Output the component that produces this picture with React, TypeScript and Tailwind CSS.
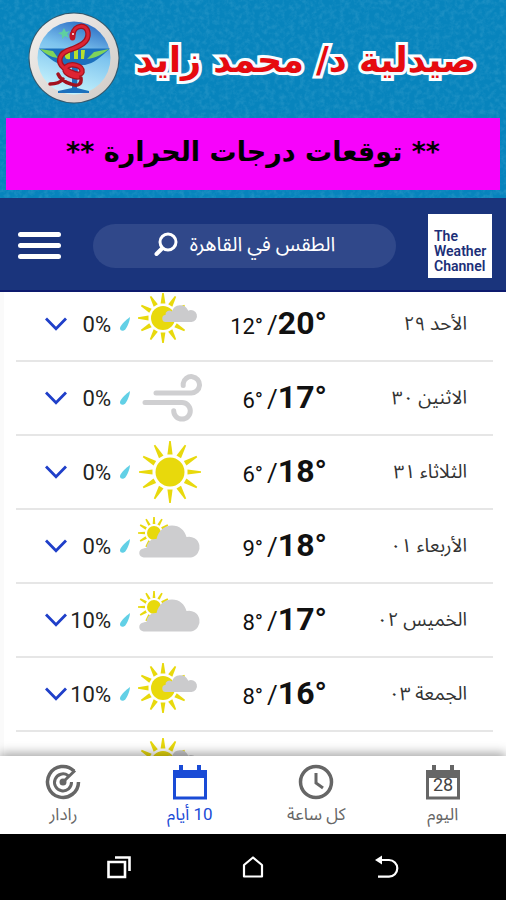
import type { ReactNode } from "react";

type Condition = "partly" | "wind" | "sunny" | "cloudy";

const forecast: {
  day: string;
  high: number;
  low: number;
  rain: number;
  condition: Condition;
}[] = [
  { day: "الأحد ٢٩", high: 20, low: 12, rain: 0, condition: "partly" },
  { day: "الاثنين ٣٠", high: 17, low: 6, rain: 0, condition: "wind" },
  { day: "الثلاثاء ٣١", high: 18, low: 6, rain: 0, condition: "sunny" },
  { day: "الأربعاء ٠١", high: 18, low: 9, rain: 0, condition: "cloudy" },
  { day: "الخميس ٠٢", high: 17, low: 8, rain: 10, condition: "cloudy" },
  { day: "الجمعة ٠٣", high: 16, low: 8, rain: 10, condition: "partly" },
];

function Sun({
  cx,
  cy,
  r,
  inner,
  outer,
  base,
}: {
  cx: number;
  cy: number;
  r: number;
  inner: number;
  outer: number;
  base: number;
}) {
  const angles = [0, 30, 60, 90, 120, 150, 180, 210, 240, 270, 300, 330];
  return (
    <g fill="#e8d90c">
      <circle cx={cx} cy={cy} r={r} />
      {angles.map((a) => (
        <path
          key={a}
          transform={`rotate(${a} ${cx} ${cy})`}
          d={`M${cx - base} ${cy - inner}L${cx - 0.8} ${cy - outer}h1.600L${cx + base} ${cy - inner}Z`}
        />
      ))}
    </g>
  );
}

function WeatherIcon({ condition }: { condition: Condition }) {
  return (
    <svg viewBox="0 0 64 64" className="w-16 h-16 shrink-0" aria-hidden="true">
      {condition === "sunny" && (
        <Sun cx={32} cy={32} r={14.5} inner={17.5} outer={31} base={2.6} />
      )}
      {condition === "partly" && (
        <>
          <Sun cx={25} cy={26} r={12} inner={14.5} outer={25} base={2.4} />
          <path
            d="M28 30a3.500 3.500 0 0 1-.5-7 4 4 0 0 1 6.500-3.500 8.500 8.500 0 0 1 16.200-.8A6 6 0 1 1 53.500 30Z"
            fill="#cbcbcd"
          />
        </>
      )}
      {condition === "cloudy" && (
        <>
          <Sun cx={16} cy={19} r={7} inner={9} outer={16} base={1.3} />
          <path
            d="M6 43.500a4.500 4.500 0 0 1-.5-9C6.500 34 7.500 34 8.500 34 9 28 13 24.500 18.500 25 20.500 17 26 11.500 34 11.500c7.500 0 12.500 4.500 14.500 11.500A10.500 10.500 0 1 1 53 43.500Z"
            fill="#cdcdcf"
          />
        </>
      )}
      {condition === "wind" && (
        <g fill="none" stroke="#cfcfd1" strokeWidth="5" strokeLinecap="round">
          <path d="M18 27H53a8.200 8.200 0 1 0-7.800-9.500v2" />
          <path d="M7 36.500H44a8.300 8.300 0 1 1-8.300 8.300" />
        </g>
      )}
    </svg>
  );
}

function Row({ item }: { item: (typeof forecast)[number] }) {
  return (
    <li className="flex h-[74px] items-center border-b-2 border-[#e6e6e6] pe-[29px] ps-[26px]">
      <span className="w-[140px] whitespace-nowrap text-[19px] text-[#333]">
        {item.day}
      </span>
      <span dir="ltr" className="flex items-baseline whitespace-nowrap text-[#111]">
        <span className="text-[22px]">{item.low}°</span>
        <span className="ms-1 text-[26px]">/</span>
        <span className="text-[32px] font-bold leading-10">{item.high}°</span>
      </span>
      <span className="flex flex-1 justify-end">
        <WeatherIcon condition={item.condition} />
      </span>
      <svg viewBox="0 0 10 14" className="h-[14px] w-[10px] shrink-0 ms-2 me-[9px]" aria-hidden="true">
        <path d="M10 0C9.800 4 7.500 9.500 5.500 12.200 3.500 14.600-.2 14 0 11 .4 8 6 3 10 0Z" fill="#62d0e6" />
      </svg>
      <span dir="ltr" className="w-11 whitespace-nowrap text-right text-[22px] text-[#222]">
        {item.rain}%
      </span>
      <button type="button" aria-label={`تفاصيل ${item.day}`} className="w-[22px] shrink-0">
        <svg viewBox="0 0 22 14" className="h-[14px] w-[22px]" fill="none" stroke="#1f3fc9" strokeWidth="2.800">
          <path d="M1 1.500 11 11.800 21 1.500" />
        </svg>
      </button>
    </li>
  );
}

function PharmacyLogo() {
  return (
    <svg viewBox="0 0 92 92" className="h-[92px] w-[92px] shrink-0" aria-hidden="true">
      <defs>
        <linearGradient id="disc" x1="0.700" y1="0" x2="0.400" y2="1">
          <stop offset="0" stopColor="#2a6cc4" />
          <stop offset="0.400" stopColor="#7cc3ee" />
          <stop offset="1" stopColor="#c9f5fd" />
        </linearGradient>
        <linearGradient id="rim" x1="0" y1="0" x2="1" y2="1">
          <stop offset="0" stopColor="#f4f1ee" />
          <stop offset="1" stopColor="#cfcac6" />
        </linearGradient>
      </defs>
      <circle cx="46" cy="46" r="45.500" fill="#35586c" />
      <circle cx="46" cy="46" r="44.500" fill="url(#rim)" />
      <circle cx="46" cy="46" r="36.500" fill="url(#disc)" />
      <path d="M11 36.500H82C72 46 66 51 57 53H50L49 76 61 79V81H30V79L44 76V53H35C26 51 20 45 11 36.500Z" fill="#1c70bd" />
      <path d="M12 37 25 39 30 46C22 45 18 42 12 37ZM81 37 66 40 59 47C68 46 75 42 81 37Z" fill="#7fd35a" />
      <path d="M37 38h5v9q-4 1-5-2ZM46 38h4v9h-4ZM53 38h4l-1 9h-3Z" fill="#b6e02e" />
      <path d="m36 16 2 4 4-1-3 3 2 4-4-2-3 3v-4l-4-2 4-1Z" fill="#5fd0a0" />
      <g fill="none" strokeLinecap="round" strokeLinejoin="round">
        <g stroke="#a3121f">
          <path d="M45 22C46 13 59 11 60 21 61 30 52 34 44 37 30 41 29 50 36 56 43 61 52 65 54 60 55 53 43 51 38 55 34 60 42 64 50 65" strokeWidth="5.500" />
          <path d="M53 66C54 72 50 75 43 72 36 70 32 67 30 62M35 67C32 71 28 72 22 72" strokeWidth="3.500" />
        </g>
        <path d="M45 22C46 13 59 11 60 21 61 30 52 34 44 37 30 41 29 50 36 56 43 61 52 65 54 60 55 53 43 51 38 55 34 60 42 64 50 65" stroke="#dd2433" strokeWidth="3" />
      </g>
      <ellipse cx="44.500" cy="24" rx="3" ry="4.500" fill="#c21626" />
      <circle cx="45" cy="22" r="1" fill="#fff" />
    </svg>
  );
}

function Banner() {
  return (
    <section className="relative bg-[#0784bd] px-[6px] pb-2 pt-3">
      <svg className="absolute inset-0 h-full w-full opacity-10" aria-hidden="true">
        <filter id="paper">
          <feTurbulence type="fractalNoise" baseFrequency="0.200" numOctaves="4" seed="4" />
          <feColorMatrix values="0 0 0 0 0.600 0 0 0 0 0.850 0 0 0 0 0.950 2.500 0 0 0 -1" />
        </filter>
        <rect width="100%" height="100%" filter="url(#paper)" />
      </svg>
      <div className="relative flex h-[92px] items-center ps-6 pe-[22px]">
        <h1 className="flex-1 whitespace-nowrap pt-1 font-['DejaVu_Sans',sans-serif] text-[35px] font-bold leading-[60px] text-[#e60a0f] [-webkit-text-stroke:6px_#fff] [paint-order:stroke_fill] [text-shadow:0_0_4px_#d8f4ff]">
          صيدلية د/ محمد زايد
        </h1>
        <PharmacyLogo />
      </div>
      <h2 className="relative mt-[14px] flex h-[72px] items-center justify-center whitespace-nowrap bg-[#f703fb] pb-1 font-['DejaVu_Sans',sans-serif] text-[27px] font-bold text-black">
        ** توقعات درجات الحرارة **
      </h2>
    </section>
  );
}

function Header() {
  return (
    <header className="flex h-[94px] shrink-0 items-center border-b-2 border-[#0d1a6e] bg-[#1a347c] pe-[18px] ps-[14px] pt-[3px]">
      <a
        href="#home"
        dir="ltr"
        className="flex h-16 w-16 items-end bg-white pb-1 pl-[6px] text-[14px] font-semibold leading-[15px] text-[#1c2f78]"
      >
        <span>
          The
          <br />
          Weather
          <br />
          Channel
        </span>
      </a>
      <button
        type="button"
        className="mx-8 flex h-11 flex-1 items-center justify-center gap-3 whitespace-nowrap rounded-full bg-[#30488a] pb-1 text-[20px] text-white"
      >
        الطقس في القاهرة
        <svg viewBox="0 0 24 24" className="h-6 w-6" fill="none" stroke="currentColor" strokeLinecap="round" aria-hidden="true">
          <circle cx="14" cy="10" r="8" strokeWidth="3" />
          <path d="M8 16.500 2.500 22" strokeWidth="4" />
        </svg>
      </button>
      <button type="button" aria-label="القائمة" className="flex w-[43px] flex-col gap-[6px]">
        <span className="h-[5px] rounded-full bg-white" />
        <span className="h-[5px] rounded-full bg-white" />
        <span className="h-[5px] rounded-full bg-white" />
      </button>
    </header>
  );
}

function Tab({ label, active, children }: { label: string; active?: boolean; children: ReactNode }) {
  return (
    <a
      href="#tab"
      aria-current={active ? "page" : undefined}
      className={`flex flex-1 flex-col items-center whitespace-nowrap text-[17px] leading-7 ${
        active ? "text-[#1a4bd6]" : "text-[#666]"
      }`}
    >
      <svg viewBox="0 0 36 36" className="h-9 w-9" fill="none" stroke="currentColor" aria-hidden="true">
        {children}
      </svg>
      {label}
    </a>
  );
}

function Calendar() {
  return (
    <>
      <path d="M2.500 8H33.500V34H2.500Z" strokeWidth="3" />
      <path d="M1 6H35V14H1ZM7 1h4v6H7ZM25 1h4v6h-4Z" fill="currentColor" stroke="none" />
    </>
  );
}

export default function App() {
  return (
    <div
      dir="rtl"
      className="flex h-screen flex-col overflow-hidden bg-white font-[Roboto,'Noto_Sans_Arabic','DejaVu_Sans',sans-serif]"
    >
      <Banner />
      <Header />

      <main className="min-h-0 flex-1 overflow-hidden border-l-4 border-[#fafafa]">
        <ul className="-mt-1 ml-3 mr-[13px]">
          {forecast.map((item) => (
            <Row key={item.day} item={item} />
          ))}
          <li className="flex h-[74px] items-center justify-end pe-[122px]">
            <WeatherIcon condition="partly" />
          </li>
        </ul>
      </main>

      <nav className="relative flex h-[78px] shrink-0 bg-white pt-2 shadow-[0_-3px_10px_rgba(0,0,0,0.350)]">
        <Tab label="اليوم">
          <Calendar />
          <text x="18" y="27" textAnchor="middle" fontSize="18" fill="#444" stroke="none">
            28
          </text>
        </Tab>
        <Tab label="كل ساعة">
          <circle cx="18" cy="18" r="15.500" strokeWidth="3.500" />
          <path d="M18 9V19L25 24" strokeWidth="3" />
        </Tab>
        <Tab label="10 أيام" active>
          <Calendar />
        </Tab>
        <Tab label="رادار">
          <path d="M29 7A15.500 15.500 0 1 0 33.500 18" strokeWidth="3.500" />
          <path d="M23 11.500A8.500 8.500 0 1 0 26.500 18M18 18 30 6.500" strokeWidth="3" />
          <circle cx="18" cy="18" r="3.500" fill="currentColor" stroke="none" />
        </Tab>
      </nav>

      <footer className="relative flex h-[66px] shrink-0 items-center justify-center gap-[108px] bg-black text-white">
        <button type="button" aria-label="رجوع">
          <svg viewBox="0 0 26 26" className="h-[26px] w-[26px]" fill="none" stroke="currentColor" strokeWidth="2.200">
            <path d="M5 6H15a8.300 8.300 0 0 1 0 16.600H4" />
            <path d="M1 6 8 1.500V10.500Z" fill="currentColor" stroke="none" />
          </svg>
        </button>
        <button type="button" aria-label="الرئيسية">
          <svg viewBox="0 0 26 26" className="h-[26px] w-[26px]" fill="none" stroke="currentColor" strokeWidth="2.200">
            <path d="M4 11 13 3.500 22 11V22.500H4Z" strokeLinejoin="round" />
          </svg>
        </button>
        <button type="button" aria-label="التطبيقات">
          <svg viewBox="0 0 26 26" className="h-[26px] w-[26px]" fill="none" stroke="currentColor" strokeWidth="2.600">
            <path d="M2.500 8H19V23H2.500Z" />
            <path d="M9 3.500H23.500V17" />
          </svg>
        </button>
      </footer>
    </div>
  );
}
